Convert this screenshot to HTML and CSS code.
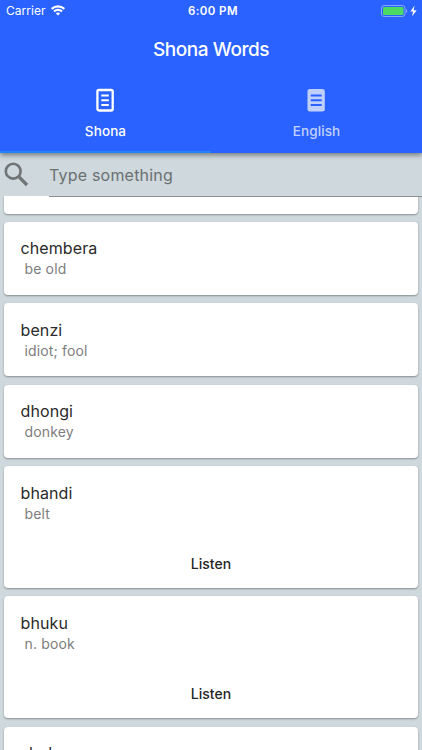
FILE: index.html
```html
<!DOCTYPE html>
<html lang="en">
<head>
    <meta charset="UTF-8">
    <meta name="viewport" content="width=device-width, initial-scale=1.0">
    <title>Shona Words</title>
    <link rel="stylesheet" href="styles.css">
</head>
<body>
    <!-- App bar -->
    <header class="app-bar">
        <div class="status-bar">
            <div class="status-left">
                <span class="carrier">Carrier</span>
                <svg class="wifi" width="14" height="11" viewBox="0 0 14 11" fill="none" stroke="#fff" stroke-width="2.1">
                    <path d="M0.7 3.9a9 9 0 0 1 12.6 0"/>
                    <path d="M3 6.5a5.7 5.7 0 0 1 8 0"/>
                    <path d="M7 10.6L4.9 8.5a3 3 0 0 1 4.2 0z" fill="#fff" stroke="none"/>
                </svg>
            </div>
            <span class="time">6:00 PM</span>
            <div class="status-right">
                <svg width="37" height="12" viewBox="0 0 37 12">
                    <rect x="0.5" y="0.5" width="23.5" height="11" rx="2.6" fill="none" stroke="#86a6ff"/>
                    <rect x="2" y="2" width="20.5" height="8" rx="1" fill="#4cd964"/>
                    <path d="M25 4v4c1.6-.5 1.6-3.5 0-4z" fill="#86a6ff"/>
                    <path d="M33.5 0.8L29.3 6.6H32L31.2 11.2L35.7 5.3H32.7z" fill="#fff"/>
                </svg>
            </div>
        </div>
        <h1>Shona Words</h1>
        <nav class="tabs">
            <div class="tab active">
                <svg width="18" height="24" viewBox="0 0 18 24" fill="none" stroke="#fff">
                    <rect x="1.4" y="2" width="15.3" height="20.5" rx="1.5" stroke-width="2.3"/>
                    <path d="M5.3 7.4h7.5M5.3 12.2h7.5M5.3 17h7.5" stroke-width="2"/>
                </svg>
                <span>Shona</span>
            </div>
            <div class="tab">
                <svg width="18" height="24" viewBox="0 0 18 24">
                    <rect x="0.5" y="1" width="17.3" height="22.5" rx="2.3" fill="#fff"/>
                    <path d="M3.7 7.4h11M3.7 12.2h11M3.7 17h11" stroke="#2962ff" stroke-width="2"/>
                </svg>
                <span>English</span>
            </div>
        </nav>
    </header>

    <!-- Search -->
    <div class="search">
        <svg width="25" height="25" viewBox="0 0 25 25" fill="none" stroke="#707476">
            <circle cx="9.2" cy="9.2" r="7.4" stroke-width="2.6"/>
            <path d="M14.7 14.7L23 23" stroke-width="3.3"/>
        </svg>
        <input type="text" placeholder="Type something">
    </div>

    <!-- Word list -->
    <main class="word-list">
        <div class="card card-cut"></div>
        <div class="card">
            <h2>chembera</h2>
            <p>be old</p>
        </div>
        <div class="card">
            <h2>benzi</h2>
            <p>idiot; fool</p>
        </div>
        <div class="card">
            <h2>dhongi</h2>
            <p>donkey</p>
        </div>
        <div class="card card-audio">
            <h2>bhandi</h2>
            <p>belt</p>
            <button>Listen</button>
        </div>
        <div class="card card-audio">
            <h2>bhuku</h2>
            <p>n. book</p>
            <button>Listen</button>
        </div>
        <div class="card">
            <h2>shoko</h2>
        </div>
    </main>
</body>
</html>
```
FILE: styles.css
```css
* {
    box-sizing: border-box;
}

body {
    font-family: Inter, Roboto, sans-serif;
    margin: 0;
    height: 100vh;
    display: flex;
    flex-direction: column;
    overflow: hidden;
    background-color: #cfd8dc;
    color: #2a2a2a;
}

.app-bar {
    position: relative;
    z-index: 2;
    flex: none;
    height: 153px;
    background-color: #2962ff;
    color: #fff;
    box-shadow: 0 2px 5px rgba(0, 0, 0, 0.45);
}

.status-bar {
    display: grid;
    grid-template-columns: 1fr auto 1fr;
    align-items: center;
    height: 21px;
    padding: 0 4px 0 6px;
}

.status-left {
    display: flex;
    align-items: center;
    gap: 5px;
}

.carrier {
    font-size: 12px;
    letter-spacing: 0.05px;
}

.time {
    padding-left: 2px;
    font-size: 11.5px;
    font-weight: 600;
    letter-spacing: 0.4px;
}

.status-right {
    display: flex;
    justify-content: flex-end;
}

h1 {
    margin: 0;
    height: 57px;
    line-height: 57px;
    text-align: center;
    font-size: 19px;
    font-weight: 500;
    letter-spacing: -0.45px;
}

.tabs {
    display: flex;
    height: 75px;
}

.tab {
    flex: 1;
    display: flex;
    flex-direction: column;
    align-items: center;
    padding-top: 10px;
    border-bottom: 2px solid transparent;
    font-size: 13.5px;
    font-weight: 500;
    line-height: 18px;
    letter-spacing: 0.1px;
}

.tab svg {
    margin-right: 1px;
}

.tab span {
    margin-top: 10px;
}

.tab:not(.active) > * {
    opacity: 0.7;
}

.tab.active {
    border-bottom-color: #2185f8;
}

.search {
    position: relative;
    z-index: 1;
    flex: none;
    display: flex;
    height: 44px;
    padding-left: 4px;
}

.search svg {
    margin: 9px 20px 0 0;
}

.search input {
    flex: 1;
    min-width: 0;
    padding: 0;
    border: none;
    border-bottom: 1px solid #8b9092;
    background: none;
    font-family: inherit;
    font-size: 16px;
    letter-spacing: 0.2px;
    outline: none;
}

.search input::placeholder {
    color: #6b7072;
}

.word-list {
    flex: 1;
    display: flex;
    flex-direction: column;
    gap: 8.15px;
    min-height: 0;
    margin-top: -1px;
    padding: 0 4px;
    overflow: hidden;
}

.card {
    flex: none;
    height: 73.3px;
    padding: 15.8px 16.5px;
    background-color: #fff;
    border-radius: 4px;
    box-shadow: 0 1px 2px rgba(0, 0, 0, 0.35);
}

.card-cut {
    height: 17.5px;
    padding: 0;
    border-radius: 0 0 4px 4px;
}

.card-audio {
    height: 122.2px;
}

.card h2 {
    margin: 0;
    font-size: 16px;
    font-weight: 400;
    line-height: 22px;
    letter-spacing: 0.1px;
}

.card p {
    margin: 0 0 0 4px;
    font-size: 14px;
    line-height: 20px;
    color: #7d7d7d;
    letter-spacing: 0.15px;
}

.card button {
    display: block;
    margin: 22px auto 0;
    padding: 0;
    border: none;
    background: none;
    font-family: inherit;
    font-size: 14px;
    font-weight: 500;
    line-height: 36px;
    color: #252525;
}
```
